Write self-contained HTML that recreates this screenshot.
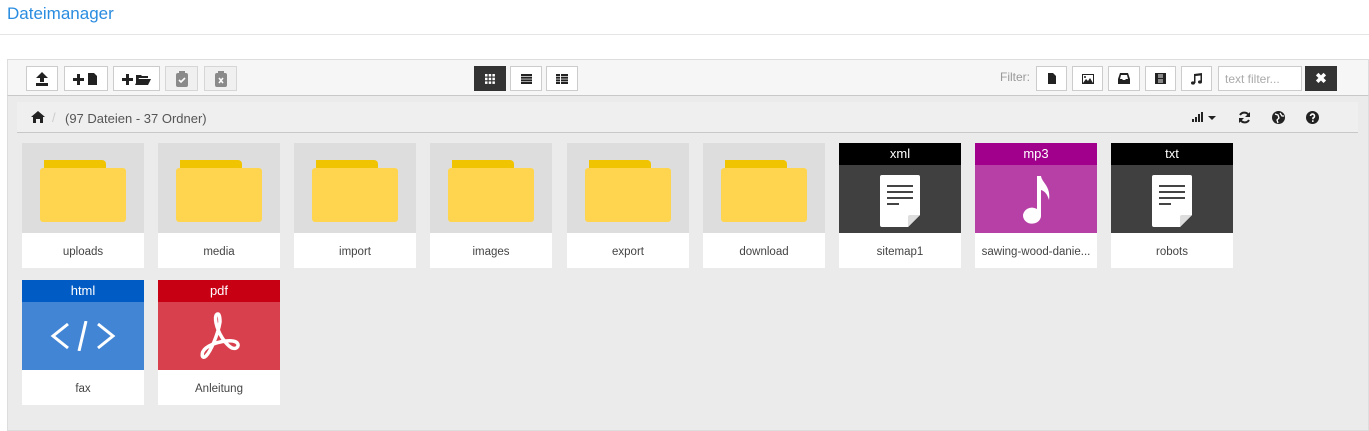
<!DOCTYPE html>
<html><head><meta charset="utf-8"><style>
*{box-sizing:border-box;margin:0;padding:0}
body{width:1369px;height:431px;background:#fff;font-family:"Liberation Sans",sans-serif;position:relative;overflow:hidden;color:#333}
.title{position:absolute;left:7px;top:4px;font-size:17px;color:#2a8ce0}
.hr{position:absolute;left:0;top:34px;width:1369px;height:1px;background:#e5e5e5}
.wrap{position:absolute;left:7px;top:59px;width:1362px;height:372px;background:#ebebeb;border:1px solid #ddd}
.tb{position:absolute;left:7px;top:59px;width:1362px;height:37px;background:#f6f6f6;border:1px solid #ddd;border-bottom:1px solid #c8c8c8}
.btn{position:absolute;top:66px;height:25px;border:1px solid #ccc;background:#fff;display:flex;align-items:center;justify-content:center}
.btn.dis{background:#eee;opacity:.75}
.btn.dark{background:#333;border-color:#333}
.bc{position:absolute;left:17px;top:102px;width:1341px;height:31px;background:#efefef;border-bottom:1px solid #c8c8c8}
.tile{position:absolute;width:122px;height:125px;background:#fff}
.tile .top{height:90px;position:relative;display:flex;align-items:center;justify-content:center}
.tile .lab{height:35px;line-height:35px;padding-top:2px;text-align:center;font-size:11.5px;color:#444;white-space:nowrap;overflow:hidden}
.hd{position:absolute;left:0;top:0;width:122px;height:22px;line-height:22px;text-align:center;color:#fff;font-size:13px}
.fold{margin-top:6px}
</style></head><body>
<div class="title">Dateimanager</div>
<div class="hr"></div>
<div class="wrap"></div>
<div class="tb"></div>
<div class="btn" style="left:26px;width:32px"><svg width="16" height="16" viewBox="0 0 16 16"><path d="M8 1L2 7h4v4h4V7h4z" fill="#222"/><rect x="2" y="12" width="12" height="3" fill="#222"/></svg></div>
<div class="btn" style="left:64px;width:44px"><svg width="26" height="14" viewBox="0 0 26 14"><path d="M4 2h3v4h4v3H7v4H4V9H0V6h4z" fill="#222"/><path d="M15 1h6l3 3v9h-9z" fill="#222"/></svg></div>
<div class="btn" style="left:113px;width:47px"><svg width="30" height="14" viewBox="0 0 30 14"><path d="M4 2h3v4h4v3H7v4H4V9H0V6h4z" fill="#222"/><path d="M14 3h5l1 1h6v2h-9l-3 7z M16 7h13l-3 6H13z" fill="#222"/></svg></div>
<div class="btn dis" style="left:165px;width:33px"><svg width="12" height="16" viewBox="0 0 12 16"><rect x="0" y="2" width="12" height="14" rx="2" fill="#666"/><rect x="3" y="0" width="6" height="4" fill="#666"/><path d="M3 9l2 2 4-4" stroke="#fff" stroke-width="1.6" fill="none"/></svg></div>
<div class="btn dis" style="left:204px;width:33px"><svg width="12" height="16" viewBox="0 0 12 16"><rect x="0" y="2" width="12" height="14" rx="2" fill="#666"/><rect x="3" y="0" width="6" height="4" fill="#666"/><path d="M4 7l4 5M8 7l-4 5" stroke="#fff" stroke-width="1.6"/></svg></div>
<div class="btn dark" style="left:474px;width:32px"><svg width="10" height="10" viewBox="0 0 10 10" fill="#fff"><rect x="0" y="0" width="2.5" height="2.5"/><rect x="3.7" y="0" width="2.5" height="2.5"/><rect x="7.4" y="0" width="2.5" height="2.5"/><rect x="0" y="3.7" width="2.5" height="2.5"/><rect x="3.7" y="3.7" width="2.5" height="2.5"/><rect x="7.4" y="3.7" width="2.5" height="2.5"/><rect x="0" y="7.4" width="2.5" height="2.5"/><rect x="3.7" y="7.4" width="2.5" height="2.5"/><rect x="7.4" y="7.4" width="2.5" height="2.5"/></svg></div>
<div class="btn" style="left:510px;width:32px"><svg width="11" height="10" viewBox="0 0 11 10" fill="#222"><rect y="0" width="11" height="2"/><rect y="2.7" width="11" height="2"/><rect y="5.4" width="11" height="2"/><rect y="8" width="11" height="2"/></svg></div>
<div class="btn" style="left:546px;width:32px"><svg width="12" height="10" viewBox="0 0 12 10" fill="#222"><rect y="0" width="4" height="2"/><rect x="5" y="0" width="7" height="2"/><rect y="2.7" width="4" height="2"/><rect x="5" y="2.7" width="7" height="2"/><rect y="5.4" width="4" height="2"/><rect x="5" y="5.4" width="7" height="2"/><rect y="8" width="4" height="2"/><rect x="5" y="8" width="7" height="2"/></svg></div>
<div style="position:absolute;left:1000px;top:70px;font-size:12px;color:#999">Filter:</div>
<div class="btn" style="left:1036px;width:31px"><svg width="8" height="11" viewBox="0 0 8 11"><path d="M0 0h5l3 3v8H0z" fill="#222"/></svg></div>
<div class="btn" style="left:1072px;width:31px"><svg width="12" height="10" viewBox="0 0 12 10"><rect width="12" height="10" fill="#222"/><rect x="1" y="1" width="10" height="8" fill="#fff"/><path d="M1 9l3-4 2 2 2-3 3 5z" fill="#222"/><circle cx="3" cy="3" r="1" fill="#222"/></svg></div>
<div class="btn" style="left:1108px;width:32px"><svg width="12" height="11" viewBox="0 0 12 11"><path d="M2 0h8l2 6v5H0V6z" fill="#222"/><path d="M3 2h6l1 4H8l-1 1H5L4 6H2z" fill="#fff"/></svg></div>
<div class="btn" style="left:1145px;width:31px"><svg width="11" height="11" viewBox="0 0 11 11"><rect width="11" height="11" fill="#222"/><rect x="3" y="1" width="5" height="4" fill="#888"/><rect x="3" y="6" width="5" height="4" fill="#888"/></svg></div>
<div class="btn" style="left:1181px;width:31px"><svg width="11" height="12" viewBox="0 0 11 12"><path d="M3 1l8-1v9h-1.5V2.5L4.5 3v7H3z" fill="#222"/><ellipse cx="2" cy="10" rx="2" ry="1.6" fill="#222"/><ellipse cx="9" cy="9" rx="2" ry="1.6" fill="#222"/></svg></div>
<div class="btn" style="left:1218px;width:84px;justify-content:flex-start;padding-left:6px;font-size:12px;color:#aaa">text filter...</div>
<div class="btn dark" style="left:1305px;width:32px;color:#fff;font-size:14px;font-weight:bold">✖</div>
<div class="bc"></div>
<svg style="position:absolute;left:31px;top:111px" width="14" height="12" viewBox="0 0 14 12"><path d="M7 0l7 6h-2v6H9V8H5v4H2V6H0z" fill="#222"/></svg>
<div style="position:absolute;left:52px;top:110px;font-size:13px;color:#ccc">/</div>
<div style="position:absolute;left:65px;top:111px;font-size:13px;color:#555">(97 Dateien - 37 Ordner)</div>
<svg style="position:absolute;left:1192px;top:112px" width="26" height="10" viewBox="0 0 26 10"><rect x="0" y="7" width="2" height="3" fill="#222"/><rect x="3" y="5" width="2" height="5" fill="#222"/><rect x="6" y="2" width="2" height="8" fill="#222"/><rect x="9" y="0" width="2" height="10" fill="#222"/><path d="M16 4h8l-4 4z" fill="#222"/></svg>
<svg style="position:absolute;left:1238px;top:111px" width="13" height="13" viewBox="0 0 13 13"><path d="M11 5A5 5 0 0 0 2 4M2 8a5 5 0 0 0 9 1" stroke="#222" stroke-width="2" fill="none"/><path d="M12 1v5H7z M1 12V7h5z" fill="#222"/></svg>
<svg style="position:absolute;left:1272px;top:111px" width="13" height="13" viewBox="0 0 13 13"><circle cx="6.5" cy="6.5" r="6.5" fill="#222"/><path d="M3 3l3 1 1 3-2 2 1 3M8 2l2 3 2 0" stroke="#fff" stroke-width="1.3" fill="none"/></svg>
<svg style="position:absolute;left:1306px;top:111px" width="13" height="13" viewBox="0 0 13 13"><circle cx="6.5" cy="6.5" r="6.5" fill="#222"/><path d="M4.5 5a2 2 0 1 1 2.5 2v1.3" stroke="#fff" stroke-width="1.6" fill="none"/><rect x="6" y="9.3" width="1.6" height="1.6" fill="#fff"/></svg>

<div class="tile" style="left:22px;top:143px"><div class="top" style="background:#ddd"><svg class="fold" width="86" height="62" viewBox="0 0 86 62"><path d="M4 0h58a4 4 0 0 1 4 4v6H4z" fill="#f0c400"/><rect x="0" y="8" width="86" height="54" rx="3" fill="#ffd54f"/></svg></div><div class="lab">uploads</div></div>
<div class="tile" style="left:158px;top:143px"><div class="top" style="background:#ddd"><svg class="fold" width="86" height="62" viewBox="0 0 86 62"><path d="M4 0h58a4 4 0 0 1 4 4v6H4z" fill="#f0c400"/><rect x="0" y="8" width="86" height="54" rx="3" fill="#ffd54f"/></svg></div><div class="lab">media</div></div>
<div class="tile" style="left:294px;top:143px"><div class="top" style="background:#ddd"><svg class="fold" width="86" height="62" viewBox="0 0 86 62"><path d="M4 0h58a4 4 0 0 1 4 4v6H4z" fill="#f0c400"/><rect x="0" y="8" width="86" height="54" rx="3" fill="#ffd54f"/></svg></div><div class="lab">import</div></div>
<div class="tile" style="left:430px;top:143px"><div class="top" style="background:#ddd"><svg class="fold" width="86" height="62" viewBox="0 0 86 62"><path d="M4 0h58a4 4 0 0 1 4 4v6H4z" fill="#f0c400"/><rect x="0" y="8" width="86" height="54" rx="3" fill="#ffd54f"/></svg></div><div class="lab">images</div></div>
<div class="tile" style="left:567px;top:143px"><div class="top" style="background:#ddd"><svg class="fold" width="86" height="62" viewBox="0 0 86 62"><path d="M4 0h58a4 4 0 0 1 4 4v6H4z" fill="#f0c400"/><rect x="0" y="8" width="86" height="54" rx="3" fill="#ffd54f"/></svg></div><div class="lab">export</div></div>
<div class="tile" style="left:703px;top:143px"><div class="top" style="background:#ddd"><svg class="fold" width="86" height="62" viewBox="0 0 86 62"><path d="M4 0h58a4 4 0 0 1 4 4v6H4z" fill="#f0c400"/><rect x="0" y="8" width="86" height="54" rx="3" fill="#ffd54f"/></svg></div><div class="lab">download</div></div>

<div class="tile" style="left:839px;top:143px"><div class="top" style="background:#404040"><div class="hd" style="background:#000">xml</div><svg style="margin-top:26px" width="42" height="52" viewBox="0 0 42 52"><path d="M3 0h36a2 2 0 0 1 2 2v38L29 52H3a2 2 0 0 1-2-2V2a2 2 0 0 1 2-2z" fill="#fff"/><path d="M29 52l12-12H31a2 2 0 0 0-2 2z" fill="#ddd"/><rect x="8" y="10" width="26" height="2" fill="#444"/><rect x="8" y="16" width="26" height="2" fill="#444"/><rect x="8" y="22" width="26" height="2" fill="#444"/><rect x="8" y="28" width="12" height="2" fill="#444"/></svg></div><div class="lab">sitemap1</div></div>
<div class="tile" style="left:975px;top:143px"><div class="top" style="background:#b640a6"><div class="hd" style="background:#a0008c">mp3</div><svg style="margin-top:24px" width="30" height="48" viewBox="0 0 30 48"><path d="M16 0h4c1 7 10 10 8 24-2-7-5-9-8-10v25a9 8 0 1 1-4-6z" fill="#fff"/></svg></div><div class="lab">sawing-wood-danie...</div></div>
<div class="tile" style="left:1111px;top:143px"><div class="top" style="background:#404040"><div class="hd" style="background:#000">txt</div><svg style="margin-top:26px" width="42" height="52" viewBox="0 0 42 52"><path d="M3 0h36a2 2 0 0 1 2 2v38L29 52H3a2 2 0 0 1-2-2V2a2 2 0 0 1 2-2z" fill="#fff"/><path d="M29 52l12-12H31a2 2 0 0 0-2 2z" fill="#ddd"/><rect x="8" y="10" width="26" height="2" fill="#444"/><rect x="8" y="16" width="26" height="2" fill="#444"/><rect x="8" y="22" width="26" height="2" fill="#444"/><rect x="8" y="28" width="12" height="2" fill="#444"/></svg></div><div class="lab">robots</div></div>

<div class="tile" style="left:22px;top:280px"><div class="top" style="background:#4285d4"><div class="hd" style="background:#005bc4">html</div><svg style="margin-top:22px" width="66" height="30" viewBox="0 0 66 30"><path d="M18 3L3 15l15 12M48 3l15 12-15 12M36 0l-7 30" stroke="#fff" stroke-width="3" fill="none"/></svg></div><div class="lab">fax</div></div>
<div class="tile" style="left:158px;top:280px"><div class="top" style="background:#d9404e"><div class="hd" style="background:#c80014">pdf</div><svg style="margin-top:22px" width="46" height="50" viewBox="0 0 46 50"><path d="M22 3c-4 0-3 10 2 20 3 6 8 12 12 14 6 2 8-4 4-6-6-3-22 0-30 6-6 5-4 12 0 8 5-5 12-22 14-34 0-5-1-8-2-8z" stroke="#fff" stroke-width="3.5" fill="none"/></svg></div><div class="lab">Anleitung</div></div>
</body></html>
